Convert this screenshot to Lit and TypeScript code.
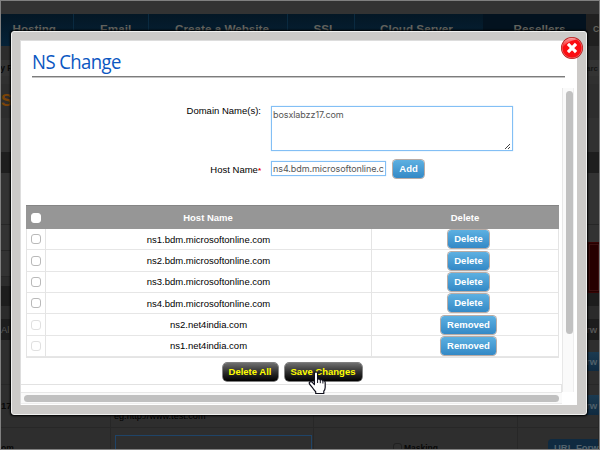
import { LitElement, html, css, svg } from "lit";
import { customElement, property } from "lit/decorators.js";
import { styleMap } from "lit/directives/style-map.js";

interface NavItem { label: string; width: number; kind: string; inset: number; }
interface Band { h: number; bg: string; left?: string; right?: string; kind?: string; line?: boolean; }

const NAV: NavItem[] = [
  { label: "Hosting", width: 73, kind: "", inset: 11.5 },
  { label: "Email", width: 75, kind: "", inset: 26 },
  { label: "Create a Website", width: 139, kind: "", inset: 26 },
  { label: "SSL", width: 67, kind: "", inset: 25.5 },
  { label: "Cloud Server", width: 128, kind: "last", inset: 25 },
  { label: "Resellers", width: 103, kind: "active", inset: 30.5 },
  { label: "C", width: 13, kind: "tail", inset: 7 },
];

const BANDS: Band[] = [
  { h: 14, bg: "#2c2c2c" },
  { h: 16, bg: "#333333", left: "y P", right: "arc", kind: "crumb" },
  { h: 8, bg: "#303030" },
  { h: 34, bg: "#2d2d2d", left: "S", kind: "brand" },
  { h: 34, bg: "#313131" },
  { h: 21, bg: "#1e1e1e" },
  { h: 52, bg: "#333333", line: true },
  { h: 26, bg: "#333333", line: true },
  { h: 26, bg: "#333333", line: true },
  { h: 9, bg: "#2c2c2c" },
  { h: 20, bg: "#1d1d1d" },
  { h: 13, bg: "#2b2b2b" },
  { h: 21, bg: "#1d1d1d", left: "Al", right: "rw", kind: "dim" },
  { h: 12, bg: "#2e2e2e" },
  { h: 19, bg: "#2e2e2e", right: "rw", kind: "link" },
  { h: 14, bg: "#2e2e2e", line: true },
  { h: 10, bg: "#2e2e2e" },
  { h: 20, bg: "#2e2e2e", left: "17", right: "rw", kind: "link" },
];

const HOSTS = [
  { name: "ns1.bdm.microsoftonline.com", removed: false },
  { name: "ns2.bdm.microsoftonline.com", removed: false },
  { name: "ns3.bdm.microsoftonline.com", removed: false },
  { name: "ns4.bdm.microsoftonline.com", removed: false },
  { name: "ns2.net4india.com", removed: true },
  { name: "ns1.net4india.com", removed: true },
];

@customElement("page-backdrop")
class PageBackdrop extends LitElement {
  static styles = css`
    :host { display: flex; flex-direction: column; position: relative; width: 598px; height: 448px; overflow: hidden; background: #2e2e2e; font-family: "Liberation Sans", Arial, sans-serif; font-size: 9.5px; color: #080808; }
    .top { height: 13px; flex: none; background: #333; }
    .nav { display: flex; height: 32px; flex: none; }
    .item { box-sizing: border-box; padding-top: 8px; line-height: 14px; font-size: 11.7px; font-weight: bold; color: #62625d; background: linear-gradient(#041725, #052238); border-right: 1px solid #0a2a40; white-space: nowrap; flex: none; }
    .last { border: 0; }
    .active { background: #03121f; border: 0; }
    .tail { background: #202020; border: 0; font-size: 8.5px; }
    .band { box-sizing: border-box; flex: none; display: flex; justify-content: space-between; align-items: center; white-space: nowrap; }
    .line { border-bottom: 1px solid #272727; }
    .l { width: 12px; }
    .r { width: 13px; align-self: stretch; display: flex; align-items: center; }
    .crumb { font-weight: bold; }
    .crumb .l { font-size: 8.5px; display: flex; justify-content: flex-end; }
    .crumb .r { color: #151515; font-size: 8px; }
    .brand .l { color: #7c4408; font: bold 17px "Liberation Sans", sans-serif; }
    .dim { color: #555; }
    .dim .r { font-weight: bold; }
    .link .r { background: linear-gradient(#1b3a50, #0f2a40); color: #50606a; font-weight: bold; }
    .link .l { font-weight: bold; }
    .below { display: flex; flex: 1; min-height: 0; }
    .cell { box-sizing: border-box; border-right: 1px solid #272727; flex: none; display: flex; flex-direction: column; }
    .note { height: 16px; margin-top: -3px; box-sizing: border-box; border-bottom: 1px solid #272727; font-size: 9.1px; line-height: 9px; padding-left: 3px; flex: none; color: #000; }
    .field { box-sizing: border-box; flex: none; margin: 7px 0 0 4px; width: 197px; height: 14px; border: 1px solid #1f4468; border-bottom: 0; }
    .mask { display: flex; gap: 2px; padding: 15px 0 0 79px; font-weight: bold; font-size: 8.5px; line-height: 10px; }
    .box { box-sizing: border-box; width: 9px; height: 9px; border: 1px solid #202020; border-radius: 3px; }
    .fwd { margin: 11px 0 0 30px; height: 20px; flex: none; background: #0f2a40; border-radius: 4px 0 0 0; color: #52626c; font-weight: bold; font-size: 9.5px; line-height: 18px; padding-left: 6px; white-space: nowrap; }
    .om { padding: 15px 0 0; line-height: 10px; font-size: 8.5px; font-weight: bold; }
    .promo { position: absolute; left: 586px; top: 241px; width: 14px; height: 51px; box-sizing: border-box; background: #260000; border: 1px solid #380404; outline: 1px solid #3c1010; outline-offset: -3px; }
  `;
  render() {
    return html`
      <div class="top"></div>
      <div class="nav">
        ${NAV.map((n) => html`<div class="item ${n.kind}" style=${styleMap({ width: `${n.width}px`, paddingLeft: `${n.inset}px` })}>${n.label}</div>`)}
      </div>
      ${BANDS.map((b) => html`
        <div class="band ${b.kind ?? ""} ${b.line ? "line" : ""}" style=${styleMap({ height: `${b.h}px`, background: b.bg })}>
          <span class="l">${b.left ?? ""}</span>
          ${b.right ? html`<span class="r">${b.right}</span>` : ""}
        </div>`)}
      <div class="below">
        <div class="cell" style="width:110px"><div class="note"></div><div class="om">om</div></div>
        <div class="cell" style="width:203px"><div class="note">eg.http://www.test.com</div><div class="field"></div></div>
        <div class="cell" style="width:204px"><div class="note"></div>
          <div class="mask"><span class="box"></span>Masking</div></div>
        <div class="cell" style="width:81px"><div class="note"></div><div class="fwd">URL Forw</div></div>
      </div>
      <div class="promo"></div>`;
  }
}

@customElement("glossy-button")
class GlossyButton extends LitElement {
  @property({ reflect: true }) tone = "blue";
  static styles = css`
    :host { display: inline-flex; box-sizing: border-box; align-items: center; justify-content: center; height: 18px; border-radius: 3.5px; font: bold 9.5px/12px "Liberation Sans", Arial, sans-serif; white-space: nowrap; color: #fff; }
    :host([tone="blue"]) { background: linear-gradient(#5db0e1, #3489c6); box-shadow: 0 0 0 1px #b9aca6; }
    :host([tone="dark"]) { background: linear-gradient(#6e6e6e, #303030 50%, #000); color: #ff0; border-radius: 4px; box-shadow: 0 0 0 0.7px #555; }
  `;
  render() { return html`<slot></slot>`; }
}

@customElement("ns-dialog")
class NsDialog extends LitElement {
  static styles = css`
    :host { display: block; box-sizing: border-box; width: 576px; height: 384px; padding: 8px 9px 9px 8px; background: #cccac8; border: 1px solid #f0f0ef; border-radius: 3px; box-shadow: 0 0 2px 1px #000; font-family: "Liberation Sans", Arial, sans-serif; font-size: 9.5px; color: #000; }
    .panel { box-sizing: border-box; height: 365px; background: #fff; border-left: 1px solid #ddd; border-top: 1px solid #ddd; display: flex; flex-direction: column; }
    .heading { margin: 0 12px 0 11px; height: 36px; box-sizing: border-box; border-bottom: 1px solid #7c7c7c; box-shadow: 0 1px 0 #c4c4c4; }
    h1 { margin: 0; font: 400 19.5px/24px "Open Sans", sans-serif; color: #0b57c2; padding-top: 9px; letter-spacing: -0.6px; }
    .title { display: inline-block; transform: scaleX(0.95); transform-origin: 0 0; }
    .view { display: grid; grid-template-columns: 541px 12px; grid-template-rows: 304px 12px; margin-top: 11px; }
    .content { display: flex; flex-direction: column; height: 304px; }
    .form { display: flex; flex-direction: column; gap: 8.5px; padding-top: 18px; height: 117px; box-sizing: border-box; }
    .row { display: grid; grid-template-columns: 240px 1fr; column-gap: 10px; }
    .label { text-align: right; line-height: 10px; }
    .lower { padding-top: 5.5px; }
    .req { color: #e00; font-size: 8px; font-weight: bold; }
    .box { box-sizing: border-box; border: 1px solid #83bff5; box-shadow: 0 0 1px #a8d4fa; background: #fff; color: #555; font: 9px/12px "Inter", sans-serif; letter-spacing: -0.08px; white-space: nowrap; }
    .area { width: 242px; height: 45px; padding: 2px 1px; display: flex; justify-content: space-between; }
    .grip { align-self: flex-end; margin-bottom: -2px; }
    .line { display: flex; align-items: center; gap: 7px; }
    .host { width: 115px; height: 15px; padding: 0 1px; line-height: 14px; }
    .table { margin-left: 5px; width: 533px; box-sizing: border-box; border: 1px solid #e4e4e4; border-top: 0; }
    .tr { display: grid; grid-template-columns: 19px 326px 1fr; height: 21.35px; align-items: stretch; }
    .tr > div { display: flex; align-items: center; justify-content: center; border-right: 1px solid #e4e4e4; border-bottom: 1px solid #e6e6e6; box-sizing: border-box; }
    .tr > div:last-child { border-right: 0; }
    .tr > .act { padding-left: 7px; }
    .head { height: 24px; background: #969696; margin: 0 -1px; color: #fff; font-weight: bold; grid-template-columns: 19px 326px 1fr; border-top: 1px solid #858585; box-sizing: border-box; }
    .head.tr > div { border: 0; }
    .check { width: 10px; height: 10px; box-sizing: border-box; border: 1px solid #b9b9b9; border-radius: 3px; background: #fff; margin-right: 1px; }
    .head .check { border-color: #fff; margin: 0; }
    .off { border-color: #e0e0e0; }
    .actions { display: flex; justify-content: center; gap: 7px; margin-top: 5px; padding-left: 1px; }
    .end { margin-top: auto; height: 7px; border-top: 1px solid #e2e2e2; border-right: 1px solid #e5e5e5; flex: none; }
    .vbar { background: #fafafa; border-left: 1px solid #e8e8e8; border-right: 1px solid #eee; box-sizing: border-box; padding: 3px 0 0 3px; }
    .vthumb { width: 6.5px; height: 243px; border-radius: 4px; background: #c1c1c1; }
    .hbar { background: #fafafa; border-top: 1px solid #e8e8e8; border-bottom: 1px solid #eee; box-sizing: border-box; padding: 2px 3px; }
    .hthumb { height: 7px; border-radius: 4px; background: #c0c0c0; }
  `;
  render() {
    return html`
      <div class="panel">
        <div class="heading"><h1><span class="title">NS Change</span></h1></div>
        <div class="view">
          <div class="content">
            <div class="form">
              <div class="row">
                <div class="label">Domain Name(s):</div>
                <div class="box area"><span>bosxlabzz17.com</span>
                  <svg class="grip" width="7" height="7" viewBox="0 0 7 7">${svg`<path d="M1 6 6 1M4 6 6 4" stroke="#444" stroke-width="1" fill="none"/>`}</svg>
                </div>
              </div>
              <div class="row">
                <div class="label lower">Host Name<span class="req">*</span></div>
                <div class="line"><div class="box host">ns4.bdm.microsoftonline.c</div><glossy-button style="width:31px">Add</glossy-button></div>
              </div>
            </div>
            <div class="table">
              <div class="tr head"><div><span class="check"></span></div><div>Host Name</div><div>Delete</div></div>
              ${HOSTS.map((h) => html`
                <div class="tr">
                  <div><span class="check ${h.removed ? "off" : ""}"></span></div>
                  <div>${h.name}</div>
                  <div class="act"><glossy-button style=${styleMap({ width: h.removed ? "55px" : "41px" })}>${h.removed ? "Removed" : "Delete"}</glossy-button></div>
                </div>`)}
            </div>
            <div class="actions">
              <glossy-button tone="dark" style="width:55px">Delete All</glossy-button>
              <glossy-button tone="dark" style="width:77px">Save Changes</glossy-button>
            </div>
            <div class="end"></div>
          </div>
          <div class="vbar"><div class="vthumb"></div></div>
          <div class="hbar"><div class="hthumb"></div></div>
        </div>
      </div>`;
  }
}

@customElement("app-root")
class AppRoot extends LitElement {
  static styles = css`
    :host { display: block; position: relative; box-sizing: border-box; width: 600px; height: 450px; border: 1px solid #808080; overflow: hidden; }
    .dialog { position: absolute; left: 10px; top: 30px; }
    .close { position: absolute; left: 559px; top: 35px; }
    .pointer { position: absolute; left: 306px; top: 369px; }
  `;
  render() {
    return html`
      <page-backdrop></page-backdrop>
      <ns-dialog class="dialog"></ns-dialog>
      <svg class="close" width="24" height="24" viewBox="0 0 24 24">
        <defs><linearGradient id="g" x1="0" y1="0" x2="0" y2="1"><stop offset="0" stop-color="#fff" stop-opacity=".55"/><stop offset="1" stop-color="#fff" stop-opacity="0.1"/></linearGradient></defs>
        <circle cx="12" cy="12" r="11" fill="#b50f0f"/>
        <circle cx="12" cy="12" r="10" fill="#fb0d12" stroke="#ef8080" stroke-width=".7"/>
        <path d="M3 11a9 9 0 0 1 14-7.5C13 4 7 6 3 11Z" fill="url(#g)"/>
        <path d="m9.1 9.1 5.8 5.8M14.9 9.1l-5.8 5.8" stroke="#fff" stroke-width="3.2" stroke-linecap="square"/>
      </svg>
      <svg class="pointer" width="22" height="26" viewBox="0 0 22 26">
        <path d="M7.4 14.5V3.6q0-1.7 1.6-1.7t1.6 1.7v5.6q1.8-.8 2.7.7 1.8-.6 2.6.9 2.3-.3 2.3 2v4.4q0 2.2-1.4 4v2.3H8.7v-1.7Q6.8 20 5.2 17.3L2.5 14q-.8-1.5.6-2.1 1.5-.6 2.7.9Z" fill="#fff" stroke="#10101c" stroke-width="1.2" stroke-linejoin="round"/>
        <path d="M10.6 9v4M13.3 10v3.2M15.9 11v2.5" stroke="#10101c" stroke-width="1" fill="none"/>
      </svg>`;
  }
}
